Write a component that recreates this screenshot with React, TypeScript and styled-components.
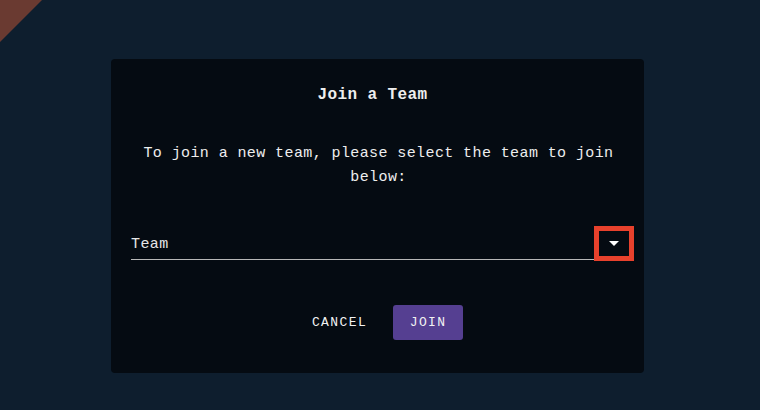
import styled, { createGlobalStyle } from "styled-components";

const GlobalStyle = createGlobalStyle`
  html, body {
    margin: 0;
    padding: 0;
    background: #0e1e2e;
  }
  * {
    box-sizing: border-box;
  }
`;

const Page = styled.div`
  position: relative;
  width: 760px;
  height: 410px;
  overflow: hidden;
  background: #0e1e2e;
  padding: 59px 0 0 111px;
  font-family: "Liberation Mono", "DejaVu Sans Mono", monospace;
  color: #eeeeee;
`;

const Corner = styled.div`
  position: absolute;
  top: 0;
  left: 0;
  width: 0;
  height: 0;
  border-top: 42px solid #6a3a31;
  border-right: 42px solid transparent;
`;

const Dialog = styled.div`
  width: 533px;
  height: 314px;
  background: #050b12;
  border-radius: 4px;
  padding: 26px 10px 0 20px;
  display: flex;
  flex-direction: column;
  align-items: stretch;
`;

const Title = styled.h2`
  margin: 0;
  text-align: center;
  font-size: 16px;
  line-height: 20px;
  font-weight: bold;
  letter-spacing: 0.4px;
  padding-right: 20px;
`;

const Message = styled.p`
  margin: 37px 0 0 0;
  text-align: center;
  font-size: 15px;
  line-height: 24px;
  letter-spacing: 0.4px;
  padding: 0 8px 0 0;
`;

const SelectRow = styled.div`
  margin-top: 36px;
  height: 34px;
  display: flex;
  align-items: stretch;
`;

const SelectField = styled.div`
  flex: 1;
  display: flex;
  align-items: center;
  padding-top: 4px;
  border-bottom: 1px solid #b8b8b8;
  font-size: 15px;
  letter-spacing: 0.4px;
  color: #e6e6e6;
`;

const ArrowBox = styled.div`
  width: 40px;
  height: 35px;
  border: 5px solid #e8412c;
  display: flex;
  align-items: center;
  justify-content: center;
`;

const Arrow = styled.span`
  width: 0;
  height: 0;
  border-left: 5px solid transparent;
  border-right: 5px solid transparent;
  border-top: 5px solid #ffffff;
`;

const Actions = styled.div`
  margin-top: 45px;
  display: flex;
  justify-content: center;
  gap: 10px;
  padding-left: 2px;
  padding-right: 8px;
`;

const Button = styled.button<{ $primary?: boolean }>`
  height: 35px;
  min-width: 70px;
  padding: 0 16px;
  border: none;
  border-radius: 3px;
  background: ${(p) => (p.$primary ? "#553f91" : "transparent")};
  color: #f2f2f2;
  font-family: "Liberation Mono", "DejaVu Sans Mono", monospace;
  font-size: 13px;
  letter-spacing: 1.4px;
  text-transform: uppercase;
`;

export default function App() {
  return (
    <>
      <GlobalStyle />
      <Page>
        <Corner />
        <Dialog>
          <Title>Join a Team</Title>
          <Message>
            To join a new team, please select the team to join below:
          </Message>
          <SelectRow>
            <SelectField>Team</SelectField>
            <ArrowBox>
              <Arrow />
            </ArrowBox>
          </SelectRow>
          <Actions>
            <Button>Cancel</Button>
            <Button $primary>Join</Button>
          </Actions>
        </Dialog>
      </Page>
    </>
  );
}
